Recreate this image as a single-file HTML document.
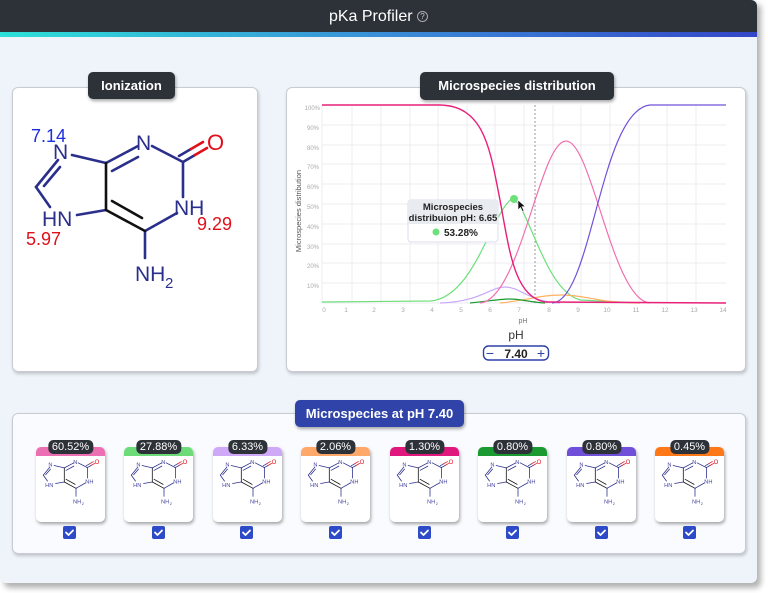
<!DOCTYPE html>
<html><head><meta charset="utf-8"><style>
*{box-sizing:border-box;margin:0;padding:0}
body{width:768px;height:593px;background:#fff;font-family:"Liberation Sans",sans-serif;position:relative;overflow:hidden}
.wrap{position:absolute;left:0;top:0;width:757px;height:583px;background:#eff4fb;border-radius:0 0 6px 6px;box-shadow:4px 5px 6px rgba(0,0,0,.3)}
.hdr{position:absolute;left:0;top:0;width:757px;height:33px;background:#2d3138;color:#fff;text-align:center;font-size:16px;line-height:33px;border-radius:0 6px 0 0}
.stripe{position:absolute;left:0;top:32px;width:757px;height:5px;background:linear-gradient(90deg,#2de0d8,#3a8fd8 50%,#3446c8)}
.panel{position:absolute;background:#fff;border:1px solid #c8ccd2;border-radius:6px;box-shadow:1px 2px 3px rgba(0,0,0,.2)}
.lbl{position:absolute;background:#2d3138;color:#fff;font-weight:bold;font-size:13px;text-align:center;border-radius:5px;box-shadow:1px 2px 3px rgba(0,0,0,.35)}
.card{position:absolute;top:447px;width:69px;height:75px;background:#fff;border-radius:5px;box-shadow:1px 2px 3px rgba(0,0,0,.35);overflow:visible}
.band{position:absolute;left:0;top:0;width:69px;height:9px;border-radius:5px 5px 0 0}
.pill{position:absolute;top:-7px;left:50%;transform:translateX(-50%);background:#2d3138;color:#fff;font-size:11px;line-height:14px;padding:0 4px;border-radius:5px}
</style></head><body>
<div class="wrap"></div>
<div class="hdr">pKa Profiler <span style="border:1px solid #aaa;border-radius:50%;display:inline-block;width:11px;height:11px;line-height:10px;font-size:8px;vertical-align:2px;color:#ccc">?</span></div>
<div class="stripe"></div>

<svg width="0" height="0" style="position:absolute">
<defs>
<g id="bonds" fill="none" stroke-linecap="round">
<g stroke="#2b2f8c" stroke-width="2.6">
<line x1="72" y1="155" x2="106" y2="163"/>
<line x1="106" y1="163" x2="138" y2="146"/><line x1="112" y1="171" x2="138" y2="157"/>
<line x1="152" y1="146" x2="183" y2="162"/>
<line x1="183" y1="162" x2="183" y2="197"/>
<line x1="177" y1="213" x2="145" y2="231"/>
<line x1="145" y1="231" x2="145" y2="258"/>
<line x1="77" y1="215" x2="106" y2="210"/>
<line x1="50" y1="207" x2="36" y2="187"/>
<line x1="36" y1="187" x2="58" y2="160"/><line x1="44" y1="186" x2="60" y2="167"/>
<line x1="183" y1="162" x2="195" y2="155"/><line x1="179" y1="156" x2="191" y2="149"/>
</g>
<g stroke="#111" stroke-width="2.6">
<line x1="106" y1="163" x2="106" y2="210"/>
<line x1="106" y1="210" x2="145" y2="231"/><line x1="112" y1="201" x2="142" y2="218"/>
</g>
<g stroke="#e0101a" stroke-width="2.6"><line x1="195" y1="155" x2="207" y2="148"/><line x1="191" y1="149" x2="203" y2="142"/></g>
</g>
</defs>
</svg>

<!-- Ionization -->
<div class="panel" style="left:12px;top:87px;width:246px;height:285px"></div>
<div class="lbl" style="left:88px;top:72px;width:87px;height:27px;line-height:27px">Ionization</div>
<svg style="position:absolute;left:0;top:0" width="270" height="300">
<use href="#bonds"/>
<g font-family="Liberation Sans,sans-serif" font-size="21" fill="#2b2f8c">
<text x="53" y="159">N</text>
<text x="136" y="150">N</text>
<text x="174" y="215">NH</text>
<text x="42" y="226">HN</text>
<text x="135" y="281">NH</text><text x="165" y="288" font-size="15">2</text>
</g>
<text x="207" y="150" font-size="22" fill="#e0101a">O</text>
<text x="31" y="142" font-size="18" fill="#1b2ee0">7.14</text>
<text x="26" y="245" font-size="18" fill="#e0101a">5.97</text>
<text x="197" y="230" font-size="18" fill="#e0101a">9.29</text>
<text x="76" y="339" font-size="12" fill="#333" text-anchor="middle">Strongest acid pKa</text>
<text x="193" y="339" font-size="12" fill="#333" text-anchor="middle">Strongest basic pKa</text>
<rect x="57.5" y="345.5" width="37" height="14" rx="5" fill="#fff" stroke="#bbb"/>
<text x="76" y="357" font-size="11.5" fill="#e0303a" text-anchor="middle" font-weight="bold">5.97</text>
<rect x="175.5" y="345.5" width="37" height="14" rx="5" fill="#fff" stroke="#bbb"/>
<text x="194" y="357" font-size="11.5" fill="#2b40c8" text-anchor="middle" font-weight="bold">7.14</text>
</svg>

<!-- Chart -->
<div class="panel" style="left:286px;top:87px;width:460px;height:285px"></div>
<div class="lbl" style="left:420px;top:72px;width:194px;height:28px;line-height:28px">Microspecies distribution</div>
<svg style="position:absolute;left:0;top:0" width="768" height="380" font-family="Liberation Sans,sans-serif">
<g stroke="#ececf0" stroke-width="1">
<line x1="322" y1="125" x2="726" y2="125"/><line x1="322" y1="145" x2="726" y2="145"/><line x1="322" y1="164" x2="726" y2="164"/><line x1="322" y1="184" x2="726" y2="184"/><line x1="322" y1="204" x2="726" y2="204"/><line x1="322" y1="224" x2="726" y2="224"/><line x1="322" y1="244" x2="726" y2="244"/><line x1="322" y1="263" x2="726" y2="263"/><line x1="322" y1="283" x2="726" y2="283"/>
<line x1="352" y1="105" x2="352" y2="303"/><line x1="381" y1="105" x2="381" y2="303"/><line x1="410" y1="105" x2="410" y2="303"/><line x1="438" y1="105" x2="438" y2="303"/><line x1="467" y1="105" x2="467" y2="303"/><line x1="495" y1="105" x2="495" y2="303"/><line x1="524" y1="105" x2="524" y2="303"/><line x1="553" y1="105" x2="553" y2="303"/><line x1="581" y1="105" x2="581" y2="303"/><line x1="610" y1="105" x2="610" y2="303"/><line x1="639" y1="105" x2="639" y2="303"/><line x1="667" y1="105" x2="667" y2="303"/><line x1="696" y1="105" x2="696" y2="303"/>
<line x1="322" y1="105" x2="322" y2="303"/><line x1="322" y1="303" x2="726" y2="303"/>
</g>
<line x1="535" y1="105" x2="535" y2="303" stroke="#999" stroke-dasharray="2,2"/>
<g font-size="6" fill="#aaa" text-anchor="end">
<text x="320" y="110">100%</text><text x="319" y="130">90%</text><text x="319" y="150">80%</text><text x="319" y="169">70%</text><text x="319" y="189">60%</text><text x="319" y="209">50%</text><text x="319" y="229">40%</text><text x="319" y="249">30%</text><text x="319" y="268">20%</text><text x="319" y="288">10%</text>
</g>
<g font-size="6.5" fill="#aaa" text-anchor="middle">
<text x="324" y="312">0</text><text x="346" y="312">1</text><text x="374" y="312">2</text><text x="403" y="312">3</text><text x="432" y="312">4</text><text x="461" y="312">5</text><text x="490" y="312">6</text><text x="519" y="312">7</text><text x="549" y="312">8</text><text x="578" y="312">9</text><text x="607" y="312">10</text><text x="636" y="312">11</text><text x="665" y="312">12</text><text x="694" y="312">13</text><text x="723" y="312">14</text>
</g>
<text x="523" y="323" font-size="7" fill="#777" text-anchor="middle">pH</text>
<text transform="translate(301,211) rotate(-90)" font-size="7.5" fill="#555" text-anchor="middle">Microspecies distribution</text>
<g fill="none" stroke-width="1.2">
<path d="M322,302 L430,301 C475,298 492,210 513,198 C530,210 545,290 580,300 L640,303" stroke="#6ee07a"/>
<path d="M440,303 C480,302 490,287 505,287 C520,287 530,302 560,303" stroke="#c8a8f8"/>
<path d="M500,303 C530,300 540,295 562,295 C585,295 600,303 640,303" stroke="#ffb060"/>
<path d="M470,303 C490,301 500,299 510,299 C520,299 530,302 545,303" stroke="#1a9a30"/>
<path d="M480,303 C520,300 540,141 566,141 C592,141 612,300 650,303" stroke="#f070b0"/>
<path d="M552,303 C592,302 600,110 650,105 L726,105" stroke="#7050d8"/>
<path d="M322,105 L440,105 C485,106 490,150 500,200 C510,255 515,296 545,302 L726,303" stroke="#e8207a" stroke-width="1.4"/>
</g>
<circle cx="514" cy="199" r="4" fill="#6ee07a"/>
<path d="M518,200 l0,10 l2.5,-2.5 l2,4 l1.5,-0.8 l-2,-4 l3.5,0 z" fill="#111" stroke="#fff" stroke-width="0.6"/>
<rect x="408" y="200" width="90" height="42" rx="3" fill="#fff" stroke="#dde"/>
<path d="M408,203 a3,3 0 0 1 3,-3 h84 a3,3 0 0 1 3,3 v21 h-90z" fill="#e8ebf0"/>
<text x="453" y="210" font-size="9.5" font-weight="bold" fill="#222" text-anchor="middle">Microspecies</text>
<text x="453" y="221" font-size="9.5" font-weight="bold" fill="#222" text-anchor="middle">distribuion pH: 6.65</text>
<circle cx="436" cy="232" r="3.5" fill="#6ee07a"/>
<text x="444" y="236" font-size="10" font-weight="bold" fill="#222">53.28%</text>
<text x="516" y="339" font-size="12" fill="#333" text-anchor="middle">pH</text>
<rect x="483.5" y="346" width="65" height="14" rx="5" fill="#fff" stroke="#2b40a8" stroke-width="1.4"/>
<text x="490" y="358" font-size="14" fill="#2b40a8" text-anchor="middle">−</text>
<text x="541" y="358" font-size="14" fill="#2b40a8" text-anchor="middle">+</text>
<text x="516" y="358" font-size="12" font-weight="bold" fill="#222" text-anchor="middle">7.40</text>
</svg>

<!-- Bottom -->
<div class="panel" style="left:12px;top:413px;width:734px;height:141px;background:#f9fbfe"></div>
<div class="lbl" style="left:295px;top:400px;width:169px;height:27px;line-height:27px;background:#2f43a8">Microspecies at pH 7.40</div>

<div class="card" style="left:36px"><div class="band" style="background:#ec6fb4"></div><div class="pill">60.52%</div></div>
<div class="card" style="left:124px"><div class="band" style="background:#6ddc78"></div><div class="pill">27.88%</div></div>
<div class="card" style="left:213px"><div class="band" style="background:#cfa8f8"></div><div class="pill">6.33%</div></div>
<div class="card" style="left:301px"><div class="band" style="background:#ffa86a"></div><div class="pill">2.06%</div></div>
<div class="card" style="left:390px"><div class="band" style="background:#e0187e"></div><div class="pill">1.30%</div></div>
<div class="card" style="left:478px"><div class="band" style="background:#1a9a30"></div><div class="pill">0.80%</div></div>
<div class="card" style="left:567px"><div class="band" style="background:#7050d8"></div><div class="pill">0.80%</div></div>
<div class="card" style="left:655px"><div class="band" style="background:#ff7818"></div><div class="pill">0.45%</div></div>

<svg style="position:absolute;left:0;top:0" width="768" height="593" font-family="Liberation Sans,sans-serif">
<defs>
<g id="mini">
<use href="#bonds"/>
<g font-size="19" fill="#4848a0">
<text x="53" y="159">N</text><text x="136" y="150">N</text>
<text x="176" y="215">NH</text><text x="42" y="226">HN</text>
<text x="135" y="281">NH</text><text x="164" y="287" font-size="13">2</text>
</g>
<text x="207" y="150" font-size="20" fill="#e0101a">O</text>
</g>
</defs>
<g transform="translate(40,458) scale(0.3) translate(-25,-130)"><use href="#mini"/></g>
<g transform="translate(128,458) scale(0.3) translate(-25,-130)"><use href="#mini"/></g>
<g transform="translate(217,458) scale(0.3) translate(-25,-130)"><use href="#mini"/></g>
<g transform="translate(305,458) scale(0.3) translate(-25,-130)"><use href="#mini"/></g>
<g transform="translate(394,458) scale(0.3) translate(-25,-130)"><use href="#mini"/></g>
<g transform="translate(482,458) scale(0.3) translate(-25,-130)"><use href="#mini"/></g>
<g transform="translate(571,458) scale(0.3) translate(-25,-130)"><use href="#mini"/></g>
<g transform="translate(659,458) scale(0.3) translate(-25,-130)"><use href="#mini"/></g>
<g fill="#2d4bc8">
<rect x="63" y="526" width="13" height="13" rx="2"/><rect x="152" y="526" width="13" height="13" rx="2"/><rect x="240" y="526" width="13" height="13" rx="2"/><rect x="329" y="526" width="13" height="13" rx="2"/><rect x="418" y="526" width="13" height="13" rx="2"/><rect x="506" y="526" width="13" height="13" rx="2"/><rect x="595" y="526" width="13" height="13" rx="2"/><rect x="683" y="526" width="13" height="13" rx="2"/>
</g>
<g fill="none" stroke="#fff" stroke-width="1.8" stroke-linecap="round" stroke-linejoin="round">
<path d="M66,532.5 l2.5,2.5 l4.5,-4.5"/><path d="M155,532.5 l2.5,2.5 l4.5,-4.5"/><path d="M243,532.5 l2.5,2.5 l4.5,-4.5"/><path d="M332,532.5 l2.5,2.5 l4.5,-4.5"/><path d="M421,532.5 l2.5,2.5 l4.5,-4.5"/><path d="M509,532.5 l2.5,2.5 l4.5,-4.5"/><path d="M598,532.5 l2.5,2.5 l4.5,-4.5"/><path d="M686,532.5 l2.5,2.5 l4.5,-4.5"/>
</g>
</svg>
</body></html>
